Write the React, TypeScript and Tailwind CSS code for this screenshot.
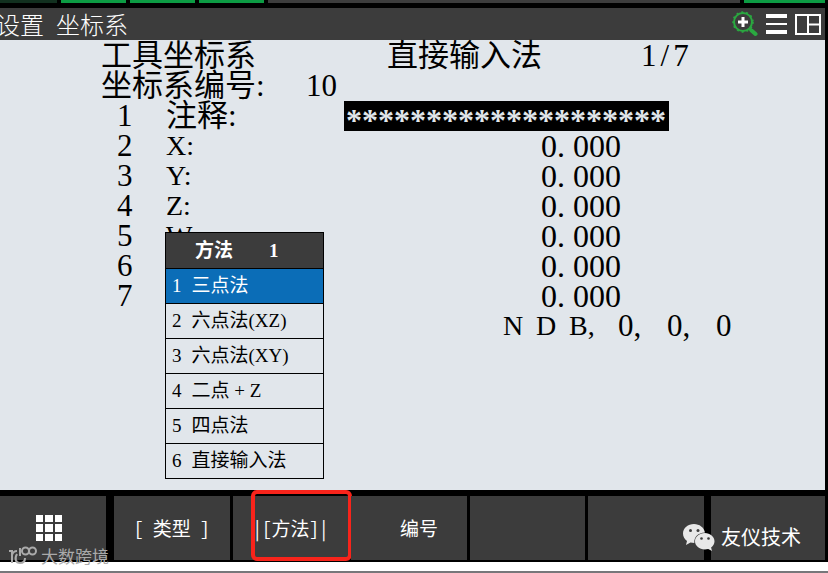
import { useState } from "react";

const tabs = [
  { width: "w-[57px]", color: "bg-[#12301f]" },
  { width: "w-[65px]", color: "bg-[#0c9b43]" },
  { width: "w-[65px]", color: "bg-[#0c9b43]" },
  { width: "w-[65px]", color: "bg-[#0c9b43]" },
  { width: "flex-1", color: "bg-[#3c3c3c]" },
  { width: "w-[81px]", color: "bg-[#0c9b43]" },
];

// The open method menu covers the labels from W down
const axes = ["X:", "Y:", "Z:", "W", "", ""];
const methods = ["三点法", "六点法(XZ)", "六点法(XY)", "二点 + Z", "四点法", "直接输入法"];
const softKeys = ["[ 类型 ]", "|[方法]|", "编号", "", ""];

function ZoomIcon() {
  return (
    <svg viewBox="0 0 26 26" className="size-[26px]" fill="none">
      <circle cx="11" cy="11" r="9" stroke="#2aa840" strokeWidth="2" />
      <circle cx="11" cy="11" r="10" stroke="#2aa840" strokeWidth="1.5" strokeDasharray="2 3" />
      <path d="M17 17l3 3" stroke="#2aa840" strokeWidth="3" />
      <path d="M19.5 19.5l4 3.5" stroke="#2aa840" strokeWidth="4" strokeLinecap="round" />
      <path d="M11 6v10M6 11h10" stroke="#fff" strokeWidth="3" />
    </svg>
  );
}

function MenuIcon() {
  return (
    <svg viewBox="0 0 21 20" className="h-5 w-[21px]" fill="#fff">
      <path d="M0 0h21v4H0zM0 9h21v2H0zM0 16h21v4H0z" />
    </svg>
  );
}

function LayoutIcon() {
  return (
    <svg viewBox="0 0 26 21" className="h-[21px] w-[26px]" fill="none" stroke="#fff" strokeWidth="2">
      <path d="M1 1h24v19H1zM13 1v19M13 10.5h12" />
    </svg>
  );
}

function WeChatIcon() {
  return (
    <svg viewBox="0 0 32 28" className="h-7 w-8">
      <path
        fill="#e8e8e8"
        d="M11 1C5 1 0 5 0 10.5c0 3 1.6 5.600 4 7.500L3 22l4.500-2.500c1.200.3 2.500.5 3.800.5C11 13.500 15 10 22 9.500 21 4.500 16.500 1 11 1z"
      />
      <path
        fill="#e8e8e8"
        d="M21.800 10c-5.400 0-9.800 3.700-9.800 8.300s4.400 8.200 9.800 8.200c1.200 0 2.300-.2 3.400-.5L29 28l-.9-3.500c2.100-1.500 3.400-3.700 3.400-6.200 0-4.600-4.300-8.300-9.700-8.300z"
      />
      <g fill="#3c3c3c">
        <circle cx="7.500" cy="7.500" r="1.500" />
        <circle cx="15" cy="7.500" r="1.500" />
        <circle cx="18.500" cy="15.500" r="1.300" />
        <circle cx="25.500" cy="15.500" r="1.300" />
      </g>
    </svg>
  );
}

function Header() {
  return (
    <header className="flex h-8 items-center justify-between bg-[#3c3c3c] pr-1">
      <h1 className="-ml-1 flex gap-3 text-[24px] leading-8 font-light text-white">
        <span>设置</span>
        <span>坐标系</span>
      </h1>
      <div className="flex items-center gap-2">
        <button aria-label="放大">
          <ZoomIcon />
        </button>
        <button aria-label="菜单">
          <MenuIcon />
        </button>
        <button aria-label="布局">
          <LayoutIcon />
        </button>
      </div>
    </header>
  );
}

function MethodMenu() {
  const [active, setActive] = useState(0);

  return (
    <div className="absolute top-48 left-[165px] w-[159px] border border-black bg-[#e1e6eb] text-[19px]">
      <div className="flex h-[35px] items-center gap-9 bg-[#3c3c3c] pl-[29px] font-bold text-white">
        <span>方法</span>
        <span>1</span>
      </div>
      {methods.map((method, i) => (
        <button
          key={method}
          onClick={() => setActive(i)}
          className={`flex h-[35px] w-full items-center gap-2.5 border-t border-black pl-1.5 ${
            i === active ? "bg-[#0b6db7] text-white" : "text-black"
          }`}
        >
          <span>{i + 1}</span>
          <span>{method}</span>
        </button>
      ))}
    </div>
  );
}

function FrameData() {
  return (
    <main className="relative flex-1 bg-[#e1e6eb] pt-px font-['Liberation_Serif','Noto_Sans_CJK_SC',serif] text-[31px] leading-[30px] text-black">
      <div className="flex pl-[101px]">
        <h2 className="w-[286px]">工具坐标系</h2>
        <span className="w-[254px]">直接输入法</span>
        <span className="flex gap-1">
          <span>1</span>
          <span>/</span>
          <span>7</span>
        </span>
      </div>
      <div className="flex pl-[101px]">
        <span className="w-[205px]">坐标系编号:</span>
        <span>10</span>
      </div>
      <table className="ml-[101px] table-fixed">
        <tbody>
          <tr className="h-[30px]">
            <td className="w-[65px] pl-4">1</td>
            <td className="w-[178px]">注释:</td>
            <td className="w-[325px] bg-black text-[32px] font-bold text-[#e1e6eb]">
              <span className="block h-[30px] pt-1 pl-0.5">********************</span>
            </td>
          </tr>
          {axes.map((axis, i) => (
            <tr key={i} className="h-[30px]">
              <td className="pl-4">{i + 2}</td>
              <td className="text-[28px]">{axis}</td>
              <td className="text-[32px]">
                <span className="flex justify-end gap-2 pr-12">
                  <span>0.</span>
                  <span>000</span>
                </span>
              </td>
            </tr>
          ))}
        </tbody>
      </table>
      <div className="flex pl-[503px]">
        <span className="w-[33px] text-[28px]">N</span>
        <span className="w-[33px] text-[28px]">D</span>
        <span className="w-[49px] text-[28px]">B,</span>
        <span className="w-[49px]">0,</span>
        <span className="w-[49px]">0,</span>
        <span>0</span>
      </div>
      <MethodMenu />
    </main>
  );
}

function SoftKeys() {
  return (
    <nav className="relative flex h-[72px] bg-black pt-1.5 pb-0.5 text-[19px] text-white [font-feature-settings:'hwid']">
      <button aria-label="主菜单" className="flex w-[106px] items-center justify-center bg-[#3c3c3c] pr-2">
        <svg viewBox="0 0 26 26" className="size-[26px]" fill="#fff">
          <path d="M0 0h7v7H0zM9 0h8v7H9zM19 0h7v7h-7zM0 9h7v8H0zM9 9h8v8H9zM19 9h7v8h-7zM0 19h7v7H0zM9 19h8v7H9zM19 19h7v7h-7z" />
        </svg>
      </button>
      <div className="mr-[7px] ml-2 grid flex-1 grid-cols-5 gap-[3px]">
        {softKeys.map((label, i) => (
          <button key={i} className={`relative bg-[#3c3c3c] ${i === 2 ? "pl-5" : ""}`}>
            {label}
            {i === 1 && (
              <span className="absolute -top-1.5 -right-1 left-[18px] h-[71px] rounded-md border-4 border-[#f8241b]" />
            )}
          </button>
        ))}
      </div>
      <button aria-label="下一页" className="w-[114px] bg-[#3c3c3c]" />

      {/* Channel marks over the key bar */}
      <div className="absolute right-6 bottom-2.5 flex items-center gap-1.5 text-[20px]">
        <WeChatIcon />
        <span>友仪技术</span>
      </div>
      <div className="absolute top-[54px] left-2 flex items-center gap-1 text-[17px] leading-6 text-[#aaaaaa]">
        <svg viewBox="0 0 29 20" className="h-5 w-[29px]" fill="none" stroke="#aaa" strokeWidth="2">
          <path d="M1 5h3v12M4 9c1-3 3-4 5-4M9 8c-3 5-1 9 3 9 3 0 5-2 5-5M12 2v8" />
          <circle cx="17.500" cy="5" r="3.500" />
          <circle cx="24.500" cy="5" r="3.500" />
        </svg>
        <span>大数跨境</span>
      </div>
    </nav>
  );
}

export default function App() {
  return (
    <div className="flex min-h-screen flex-col bg-white font-['Noto_Sans_CJK_SC',sans-serif]">
      <div className="flex flex-1 flex-col border-r-[3px] border-black">
        <div className="flex h-2 gap-1 bg-black pb-[5px]">
          {tabs.map((tab, i) => (
            <span key={i} className={`${tab.width} ${tab.color}`} />
          ))}
        </div>
        <Header />
        <FrameData />
        <SoftKeys />
      </div>
      <div className="h-[11px] border-b-2 border-[#77777a] bg-white" />
    </div>
  );
}
